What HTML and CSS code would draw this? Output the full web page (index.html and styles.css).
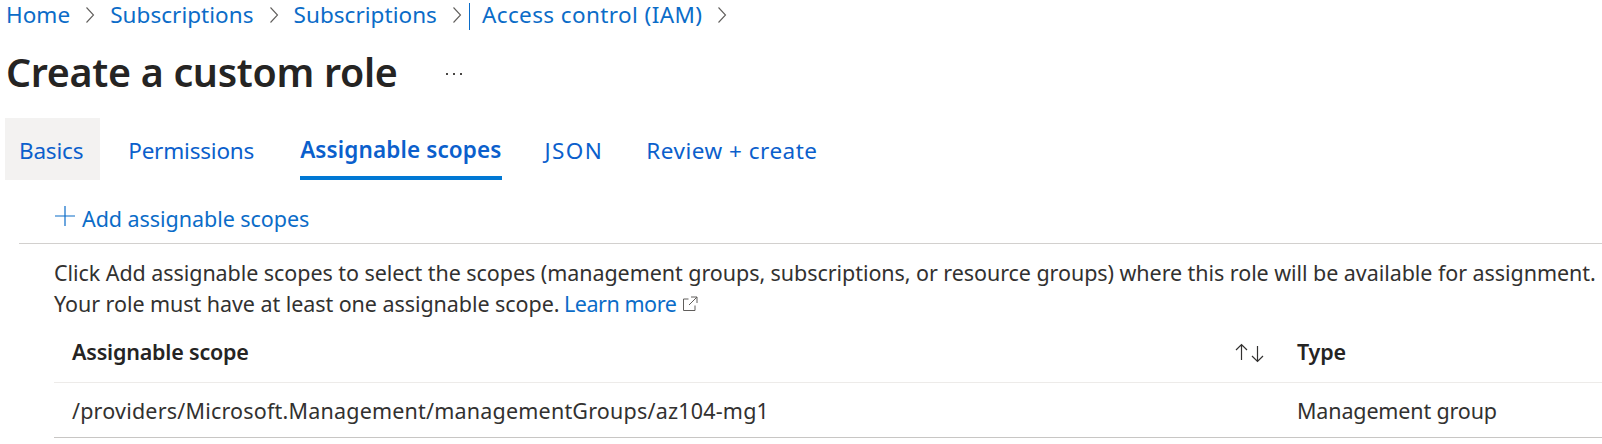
FILE: index.html
```html
<!DOCTYPE html>
<html lang="en">
<head>
<meta charset="utf-8">
<title>Create a custom role</title>
<link rel="stylesheet" href="styles.css">
</head>
<body>
<nav class="crumbs">
  <a class="link">Home</a>
  <svg class="chev" viewBox="0 0 10 18"><path d="M1.5 1.5 8.5 9l-7 7.500"/></svg>
  <a class="link">Subscriptions</a>
  <svg class="chev" viewBox="0 0 10 18"><path d="M1.5 1.5 8.5 9l-7 7.500"/></svg>
  <a class="link">Subscriptions</a>
  <svg class="chev chev-tight" viewBox="0 0 10 18"><path d="M1.5 1.5 8.5 9l-7 7.500"/></svg>
  <span class="bar"></span>
  <a class="link link-iam">Access control (IAM)</a>
  <svg class="chev" viewBox="0 0 10 18"><path d="M1.5 1.5 8.5 9l-7 7.500"/></svg>
</nav>
<header class="title-row">
  <h1 class="title">Create a custom role</h1>
  <span class="more" aria-label="More"><i></i><i></i><i></i></span>
</header>
<div class="tabs">
  <a class="tab tab-hover">Basics</a>
  <a class="tab">Permissions</a>
  <a class="tab tab-active">Assignable scopes</a>
  <a class="tab tab-json">JSON</a>
  <a class="tab tab-review">Review + create</a>
</div>
<div class="toolbar">
  <svg class="plus" viewBox="0 0 20 20"><path d="M10 0v20M0 10h20"/></svg>
  <a class="link">Add assignable scopes</a>
</div>
<main class="content">
  <p class="desc">Click Add assignable scopes to select the scopes (management groups, subscriptions, or resource groups) where this role will be available for assignment.<br>Your role must have at least one assignable scope. <a class="link link-learn">Learn more</a><svg class="ext" viewBox="0 0 16 16"><path d="M6.500 3H1.500v11.500h11.500V9.500M9 1h6v6M15 1 7 9"/></svg></p>
  <div class="row row-head">
    <div class="cell-scope">Assignable scope</div>
    <svg class="sort" viewBox="0 0 30 20"><path d="M6.500 17V1.500M1 7l5.500-5.500L12 7M22.500 3v15.500M17 13l5.500 5.500L28 13"/></svg>
    <div class="cell-type">Type</div>
  </div>
  <div class="row row-body">
    <div class="cell-scope cell-path">/providers/Microsoft.Management/managementGroups/az104-mg1</div>
    <div class="cell-type">Management group</div>
  </div>
</main>
</body>
</html>
```
FILE: styles.css
```css
* { box-sizing: border-box; }
html, body { margin: 0; padding: 0; }
body {
  width: 1602px;
  height: 444px;
  overflow: hidden;
  background: #fff;
  color: #323130;
  font-family: "Noto Sans", "Open Sans", sans-serif;
  font-size: 21.5px;
  letter-spacing: -0.06px;
}
.link { color: #0b6cc8; text-decoration: none; }
.crumbs {
  display: flex;
  align-items: center;
  height: 28px;
  padding-left: 6px;
  font-size: 22.5px;
  letter-spacing: 0.04px;
}
.chev { width: 10px; height: 18px; margin: 2px 15px 0 15px; flex: none; }
.chev-tight { margin-right: 2px; }
.chev path { fill: none; stroke: #605e5c; stroke-width: 1.1; }
.bar { width: 1px; height: 27px; margin: 4px 12px 0 5px; background: #0b6cc8; }
.link-iam { letter-spacing: 0.4px; }
.title-row {
  display: flex;
  align-items: center;
  height: 58px;
  margin-top: 15px;
  padding-left: 6px;
}
.title {
  margin: 0;
  font-size: 39.4px;
  font-weight: 600;
  color: #252423;
  letter-spacing: -0.3px;
}
.more { display: flex; gap: 5px; margin: 3px 0 0 48px; }
.more i { width: 2px; height: 2px; background: #484644; }
.tabs {
  display: flex;
  align-items: stretch;
  height: 62px;
  margin-top: 17px;
  margin-left: 5px;
  font-size: 22.5px;
  letter-spacing: -0.2px;
}
.tab {
  display: flex;
  align-items: center;
  padding: 3px 15px 0;
  margin-right: 14px;
  color: #0b5fcc;
}
.tab-hover { background: #f3f2f1; padding: 3px 17px 0 14px; margin-right: 13px; }
.tab-active {
  font-weight: 600;
  padding: 4px 0 0;
  margin: 0 28px 0 17px;
  border-bottom: 4px solid #0078d4;
  letter-spacing: 0.12px;
}
.tab-json { letter-spacing: 1.4px; padding-right: 14px; }
.tab-review { letter-spacing: 0.5px; }
.toolbar {
  display: flex;
  align-items: center;
  height: 64px;
  margin-left: 19px;
  padding: 13px 0 0 36px;
  border-bottom: 1px solid #d2d0ce;
  letter-spacing: -0.05px;
}
.plus { width: 20px; height: 20px; margin: 0 7px 4px 0; }
.plus path { fill: none; stroke: #0b6cc8; stroke-width: 1.2; }
.content { margin-left: 54px; }
.desc { margin: 13px 0 0; line-height: 31px; white-space: nowrap; }
.link-learn { letter-spacing: -0.45px; margin-left: -1px; }
.ext { width: 16px; height: 16px; margin-left: 6px; vertical-align: 0; }
.ext path { fill: none; stroke: #605e5c; stroke-width: 1; }
.row {
  display: flex;
  align-items: center;
  padding-left: 18px;
}
.row-head { height: 58px; margin-top: 6px; padding-bottom: 4px; border-bottom: 1px solid #edebe9; font-weight: 600; color: #252423; letter-spacing: -0.2px; }
.row-body { height: 55px; padding-top: 1px; border-bottom: 1px solid #c8c6c4; letter-spacing: -0.2px; }
.cell-scope { width: 1163px; flex: none; }
.cell-path { letter-spacing: 0.2px; }
.sort { width: 30px; height: 20px; flex: none; margin: 2px 32px 0 0; }
.sort path { fill: none; stroke: #323130; stroke-width: 1.2; }
.row-body .cell-type { margin-left: 62px; letter-spacing: -0.15px; }
```
